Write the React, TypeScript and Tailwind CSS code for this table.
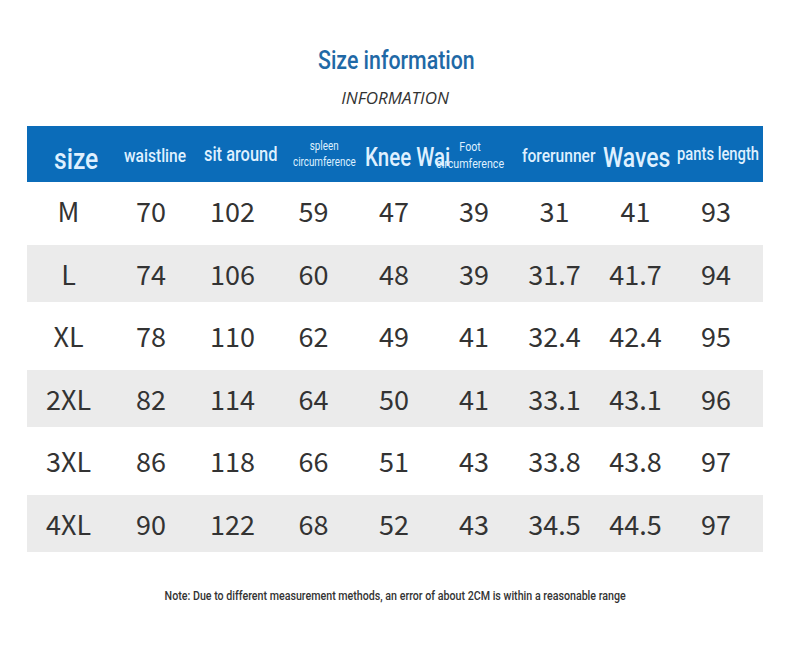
const cols = "grid grid-cols-[83px_82px_81px_81px_80px_80px_81px_81px_87px]";

const rows = [
  ["M", "70", "102", "59", "47", "39", "31", "41", "93"],
  ["L", "74", "106", "60", "48", "39", "31.7", "41.7", "94"],
  ["XL", "78", "110", "62", "49", "41", "32.4", "42.4", "95"],
  ["2XL", "82", "114", "64", "50", "41", "33.1", "43.1", "96"],
  ["3XL", "86", "118", "66", "51", "43", "33.8", "43.8", "97"],
  ["4XL", "90", "122", "68", "52", "43", "34.5", "44.5", "97"],
];

const narrow = "inline-block whitespace-nowrap origin-left scale-x-[0.82]";

const App = () => {
  return (
    <div className="w-[790px] h-[657px] bg-white flex flex-col items-center [font-family:Roboto,sans-serif]">
      <div className="mt-[44px] h-[32px] w-[154px] text-[26px] leading-[32px] font-medium text-[#1f69a6]">
        <span className={narrow}>Size information</span>
      </div>
      <div className="mt-[11px] text-[17px] leading-[22px] italic text-[#333] [font-family:'Open_Sans',sans-serif]">
        INFORMATION
      </div>

      <div className="mt-[17px] w-[736px] self-start ml-[27px]">
        <div className={`${cols} h-[56px] bg-[#0b6cb9] text-[#dff0ff] font-medium`}>
          <div className="pl-[27px] pt-[13px] text-[30px] leading-[40px]">
            <span className={narrow}>size</span>
          </div>
          <div className="pl-[14px] pt-[16px] text-[19px] leading-[28px]">
            <span className={narrow}>waistline</span>
          </div>
          <div className="pl-[12px] pt-[14px] text-[20px] leading-[28px]">
            <span className={narrow}>sit around</span>
          </div>
          <div className="pl-[20px] pt-[12px] text-[12px] leading-[16px] font-normal">
            <div className="w-[76px] origin-left scale-x-[0.82] text-center">
              <div>spleen</div>
              <div>circumference</div>
            </div>
          </div>
          <div className="pl-[11px] pt-[15px] text-[25px] leading-[34px]">
            <span className={narrow}>Knee Wai</span>
          </div>
          <div className="relative pt-[12px] text-[13px] leading-[17px] font-normal">
            <div className="w-[88px] origin-left scale-x-[0.82] text-center">
              <div>Foot</div>
              <div>circumference</div>
            </div>
          </div>
          <div className="pl-[8px] pt-[16px] text-[19px] leading-[28px]">
            <span className={narrow}>forerunner</span>
          </div>
          <div className="pl-[8px] pt-[13px] text-[28px] leading-[38px]">
            <span className={narrow}>Waves</span>
          </div>
          <div className="pl-[1px] pt-[14px] text-[18px] leading-[28px]">
            <span className={narrow}>pants length</span>
          </div>
        </div>

        <div className="flex flex-col gap-[5.5px] [font-family:'Noto_Sans_CJK_SC','Noto_Sans',sans-serif] text-[27px] text-[#333]">
          {rows.map((r, i) => (
            <div key={r[0]} className={`${cols} h-[57px] items-center ${i % 2 === 1 ? "bg-[#ebebeb]" : ""}`}>
              {r.map((c, j) => (
                <div key={j} className={`text-center leading-none ${j === 8 ? "pr-[7px]" : ""}`}>
                  {c}
                </div>
              ))}
            </div>
          ))}
        </div>
      </div>

      <div className="mt-[36px] text-[13px] leading-[16px] text-[#333] font-medium">
        <span className="inline-block whitespace-nowrap scale-x-[0.82]">
          Note: Due to different measurement methods, an error of about 2CM is within a reasonable range
        </span>
      </div>
    </div>
  );
};

export default App;
